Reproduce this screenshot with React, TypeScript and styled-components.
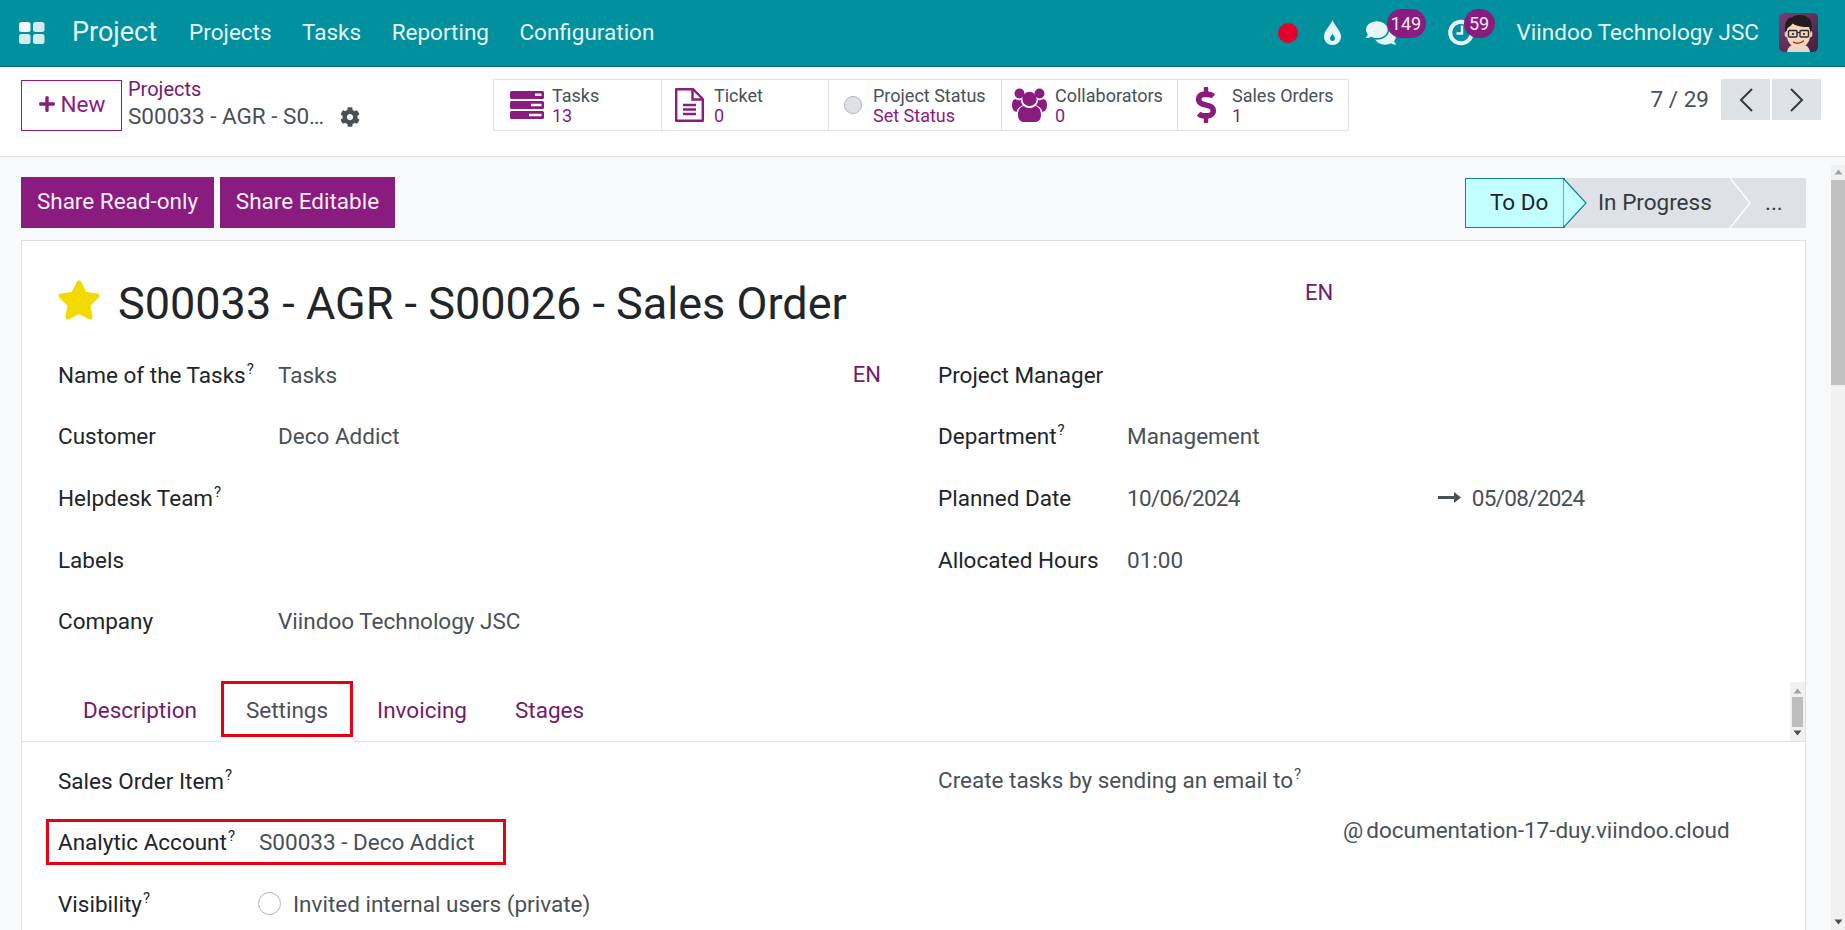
import React from "react";
import styled, { createGlobalStyle } from "styled-components";
import { FaCog, FaComments, FaDollarSign, FaPlus, FaStar } from "react-icons/fa";

const PURPLE = "#8a1c7f";
const LINK = "#741a6e";
const LINE = "#dee2e6";
const RED = "#e60012";
const BODY = "22.5px";

const Global = createGlobalStyle`
  html, body { margin: 0; padding: 0; height: 100%; overflow: hidden; }
  body { font-family: Roboto, "Liberation Sans", sans-serif; font-size: ${BODY}; color: #212529; background: #f8f9fb; }
  * { box-sizing: border-box; }
`;

const Page = styled.div`
  width: 1845px;
  height: 930px;
  display: flex;
  flex-direction: column;
  overflow: hidden;
`;

/* ---------- navbar ---------- */
const Nav = styled.header`
  height: 67px;
  flex: none;
  background: #00909e;
  border-bottom: 1px solid #0a6670;
  display: flex;
  align-items: center;
  color: #e6f5f6;
  padding: 0 27px 1px 19px;
`;
const AppName = styled.span`
  font-size: 27px;
  margin-left: 27px;
  margin-right: 32px;
  padding-bottom: 2px;
`;
const MenuItem = styled.span`
  font-size: ${BODY};
  margin-right: 30.5px;
  padding-bottom: 1px;
`;
const NavRight = styled.div`
  margin-left: auto;
  display: flex;
  align-items: center;
`;
const RecDot = styled.span`
  width: 20px;
  height: 20px;
  border-radius: 50%;
  background: #e4002b;
  margin-right: 26px;
`;
const IconSlot = styled.span<{ $mr: number }>`
  position: relative;
  display: flex;
  align-items: center;
  margin-right: ${(p) => p.$mr}px;
`;
const Badge = styled.span<{ $l: number; $w: number; $t: number }>`
  position: absolute;
  left: ${(p) => p.$l}px;
  top: ${(p) => p.$t}px;
  width: ${(p) => p.$w}px;
  height: 29px;
  border-radius: 15px;
  background: ${PURPLE};
  color: #f5e9f4;
  font-size: 18px;
  display: flex;
  align-items: center;
  justify-content: center;
`;
const Company = styled.span`
  font-size: ${BODY};
  margin-right: 20px;
  padding-bottom: 1px;
`;

/* ---------- control panel ---------- */
const Toolbar = styled.div`
  height: 90px;
  flex: none;
  background: #fff;
  border-bottom: 1px solid ${LINE};
  display: flex;
  align-items: flex-start;
  padding: 12px 24px 0 21px;
`;
const NewButton = styled.button`
  width: 101px;
  height: 51px;
  margin-top: 1px;
  background: #fff;
  border: 1px solid ${PURPLE};
  color: ${PURPLE};
  font: 400 22.5px Roboto, sans-serif;
  display: flex;
  align-items: center;
  justify-content: center;
  gap: 5px;
  padding: 0 0 3px;
  svg { color: ${PURPLE}; }
`;
const Crumbs = styled.div`
  width: 371px;
  padding-left: 6px;
  line-height: 27px;
  margin-top: -3px;
`;
const CrumbLink = styled.div`
  color: ${LINK};
  font-size: 20px;
`;
const CrumbCurrent = styled.div`
  display: flex;
  align-items: center;
  color: #495057;
  font-size: ${BODY};
  gap: 16px;
  svg { color: #495057; }
`;
const Stats = styled.div`
  display: flex;
  height: 52px;
  border: 1.5px solid ${LINE};
`;
const Stat = styled.div<{ $w: number; $pl: number; $gap: number }>`
  width: ${(p) => p.$w}px;
  padding-left: ${(p) => p.$pl}px;
  display: flex;
  align-items: center;
  gap: ${(p) => p.$gap}px;
  & + & { border-left: 1.5px solid ${LINE}; }
`;
const StatText = styled.div`
  display: flex;
  flex-direction: column;
  line-height: 20px;
  font-size: 18px;
  margin-top: 1px;
`;
const StatLabel = styled.span`
  color: #495057;
`;
const StatValue = styled.span`
  color: ${PURPLE};
`;
const StatusDot = styled.span`
  width: 18px;
  height: 18px;
  border-radius: 50%;
  background: #dee2e6;
  border: 1px solid #adb5bd;
`;
const Pager = styled.div`
  margin-left: auto;
  display: flex;
  align-items: flex-start;
  gap: 2px;
`;
const PagerText = styled.span`
  font-size: 22.5px;
  color: #495057;
  line-height: 41px;
  margin-right: 10px;
`;
const PagerButton = styled.span`
  width: 49px;
  height: 41px;
  background: #dee2e6;
  display: flex;
  align-items: center;
  justify-content: center;
`;

/* ---------- main ---------- */
const Main = styled.main`
  flex: 1;
  display: flex;
  min-height: 0;
  background: #f8f9fb;
`;
const Content = styled.div`
  width: 1831px;
  padding: 20px 25px 0 21px;
  display: flex;
  flex-direction: column;
`;
const TopRow = styled.div`
  display: flex;
  justify-content: space-between;
  align-items: flex-start;
  height: 63px;
  flex: none;
`;
const ActionGroup = styled.div`
  display: flex;
  gap: 6px;
`;
const ActionButton = styled.button<{ $w: number }>`
  width: ${(p) => p.$w}px;
  height: 51px;
  background: ${PURPLE};
  border: none;
  padding: 0 0 3px;
  color: #f6edf5;
  font: 400 22.5px Roboto, sans-serif;
`;
const StatusBar = styled.div`
  display: flex;
  width: 341px;
  height: 50px;
  margin-top: 1px;
  background: #dee2e6;
`;
const ActiveStage = styled.div`
  position: relative;
  width: 100px;
  height: 100%;
  background: #c3ffff;
  border: 1.5px solid #11868f;
  display: flex;
  align-items: center;
  padding: 0 0 2px 24px;
  font-size: ${BODY};
  color: #212529;
`;
const StageTip = styled.svg<{ $l: number }>`
  position: absolute;
  left: ${(p) => p.$l}px;
  top: -1.5px;
`;
const ChevronTip = styled.svg<{ $l: number }>`
  position: absolute;
  left: ${(p) => p.$l}px;
  top: 0;
`;
const Stage = styled.div<{ $w: number; $pl: number }>`
  position: relative;
  width: ${(p) => p.$w}px;
  height: 100%;
  padding: 0 0 2px ${(p) => p.$pl}px;
  display: flex;
  align-items: center;
  font-size: ${BODY};
  color: #343a40;
`;
const Sheet = styled.section`
  flex: 1;
  background: #fff;
  border: 1px solid ${LINE};
  border-bottom: none;
`;
const TitleRow = styled.div`
  height: 103px;
  display: flex;
  padding-left: 35px;
  padding-top: 37px;
`;
const Title = styled.h1`
  margin: -4px 0 0 17px;
  width: 1187px;
  font-size: 45px;
  font-weight: 400;
  line-height: 60px;
  color: #212529;
`;
const Lang = styled.span`
  color: ${LINK};
  font-size: 22px;
`;
const TitleLang = styled(Lang)`
  margin-top: 2px;
`;
const Columns = styled.div`
  display: grid;
  grid-template-columns: 880px 1fr;
  padding-left: 36px;
  height: 338px;
`;
const Row = styled.div<{ $label?: number; $pr?: number }>`
  position: relative;
  display: grid;
  grid-template-columns: ${(p) => p.$label ?? 220}px 1fr auto;
  align-items: center;
  height: 61.6px;
  padding-right: ${(p) => p.$pr ?? 0}px;
`;
const Label = styled.span`
  color: #212529;
  font-size: ${BODY};
`;
const Help = styled.sup`
  font-size: 15px;
  line-height: 0;
  margin-left: 1px;
  vertical-align: 9px;
`;
const Value = styled.span`
  color: #495057;
  font-size: ${BODY};
`;
const DateValue = styled(Value)`
  letter-spacing: -0.7px;
`;
const DateRange = styled.span`
  display: flex;
  align-items: center;
`;
const DateEnd = styled.span`
  margin-left: 198px;
  display: flex;
  align-items: center;
  gap: 11px;
`;
const TabBar = styled.div`
  display: flex;
  height: 60px;
  border-bottom: 1px solid ${LINE};
  padding-left: 36px;
`;
const Tab = styled.div<{ $active?: boolean }>`
  position: relative;
  height: ${(p) => (p.$active ? 60 : 59)}px;
  padding: 0 ${(p) => (p.$active ? 25 : 24)}px 4px;
  display: flex;
  align-items: center;
  font-size: ${BODY};
  color: ${(p) => (p.$active ? "#495057" : LINK)};
  background: #fff;
  &:first-child { padding-left: 25px; }
`;
const TabHighlight = styled.span`
  position: absolute;
  left: 0;
  right: 0;
  top: -1px;
  height: 56px;
  border: 3px solid ${RED};
`;
const TabScroll = styled.div`
  margin-left: auto;
  width: 15px;
  height: 59px;
  background: #f1f1f1;
  display: flex;
  flex-direction: column;
  align-items: center;
  justify-content: space-between;
  padding: 6px 0 5px;
`;
const TabThumb = styled.span`
  width: 11px;
  height: 30px;
  background: #bdbdbd;
`;
const Panel = styled.div`
  display: grid;
  grid-template-columns: 880px 1fr;
  padding: 8px 0 0 36px;
`;
const RowHighlight = styled.span`
  position: absolute;
  left: -12px;
  top: 7px;
  width: 460px;
  height: 46px;
  border: 3px solid ${RED};
`;
const Radio = styled.span`
  width: 23px;
  height: 23px;
  border: 1px solid #adb5bd;
  border-radius: 50%;
  background: #fff;
  margin-right: 12px;
`;
const RadioLine = styled.span`
  display: flex;
  align-items: center;
  color: #495057;
  font-size: ${BODY};
`;
const EmailLabel = styled.div`
  height: 61.6px;
  line-height: 61.6px;
  color: #495057;
  font-size: ${BODY};
`;
const EmailLine = styled.div`
  margin: 5px 0 0 405px;
  color: #495057;
  font-size: ${BODY};
  display: flex;
  gap: 3px;
`;
const PageScroll = styled.div`
  width: 14px;
  margin-top: 8px;
  background: #f1f1f1;
  display: flex;
  flex-direction: column;
  align-items: center;
  padding: 4px 0 5px;
`;
const PageThumb = styled.span`
  width: 14px;
  height: 205px;
  margin-top: 5px;
  background: #c1c1c1;
`;
const PageScrollEnd = styled.span`
  margin-top: auto;
  display: flex;
`;

const Arrow = ({ up, fill = "#505050" }: { up?: boolean; fill?: string }) => (
  <svg width="9" height="6" viewBox="0 0 9 6">
    <path d={up ? "M4.5 0.5L8.5 5.5H0.5Z" : "M0.5 0.5H8.5L4.5 5.5Z"} fill={fill} />
  </svg>
);

const AppsIcon = () => (
  <svg width="26" height="22" viewBox="0 0 26 22">
    <rect x="0" y="0" width="11.5" height="10" rx="2.5" fill="#f4fbfb" />
    <rect x="14" y="0" width="11.5" height="10" rx="2.5" fill="#d3ecee" />
    <rect x="0" y="12" width="11.5" height="10" rx="2.5" fill="#d3ecee" />
    <rect x="14" y="12" width="11.5" height="10" rx="2.5" fill="#d3ecee" />
  </svg>
);
const DropIcon = () => (
  <svg width="17" height="25" viewBox="0 0 17 25">
    <path d="M8.5 0C10 5 17 10.5 17 16.5C17 21.5 13 25 8.5 25C4 25 0 21.5 0 16.5C0 10.5 7 5 8.5 0Z" fill="#e6f5f6" />
    <path d="M8.5 13.5C9.2 15.5 11 16.8 11 18.6C11 20 9.9 21 8.5 21C7.1 21 6 20 6 18.6C6 16.8 7.8 15.5 8.5 13.5Z" fill="#00909e" />
  </svg>
);
const ClockIcon = () => (
  <svg width="26" height="27" viewBox="0 0 26 27">
    <circle cx="13" cy="13.5" r="10.8" fill="none" stroke="#e6f5f6" strokeWidth="4" />
    <path d="M14 6.5V14.5H8.5" fill="none" stroke="#e6f5f6" strokeWidth="2.4" />
  </svg>
);
const Avatar = () => (
  <svg width="39" height="39" viewBox="0 0 39 39">
    <defs>
      <linearGradient id="avbg" x1="0" y1="0" x2="1" y2="1">
        <stop offset="0" stopColor="#7a3f72" />
        <stop offset="1" stopColor="#43203f" />
      </linearGradient>
    </defs>
    <rect width="39" height="39" rx="5" fill="url(#avbg)" />
    <path d="M8 39C9 33 13 31 19.5 31C26 31 30 33 31 39Z" fill="#e9d4c6" />
    <ellipse cx="7.6" cy="21" rx="2" ry="3.2" fill="#f0c9ad" />
    <ellipse cx="31.4" cy="21" rx="2" ry="3.2" fill="#f0c9ad" />
    <path d="M8 17C8 11 13 9 19.5 9C26 9 31 11 31 17V23C31 30 25 35 19.5 35C14 35 8 30 8 23Z" fill="#f6d3ba" />
    <path d="M6.5 20C4.5 10 9 3.5 13 4.5C16 1 27 1.5 29 5C33 6 33.5 14 32 20L30 14C24 14.5 17 13 13.5 10.5C12.5 13 10 14 8.5 15Z" fill="#241b1d" />
    <rect x="9.5" y="17.5" width="8.5" height="6.5" rx="1" fill="#f6d3ba" stroke="#2b2b2b" strokeWidth="1.4" />
    <rect x="21" y="17.5" width="8.5" height="6.5" rx="1" fill="#f6d3ba" stroke="#2b2b2b" strokeWidth="1.4" />
    <path d="M18 19.5H21" stroke="#2b2b2b" strokeWidth="1.2" />
    <circle cx="14" cy="21" r="1.1" fill="#222" />
    <circle cx="25" cy="21" r="1.1" fill="#222" />
    <path d="M14.5 29C17 31 22 30.5 24.5 28" fill="none" stroke="#7c4034" strokeWidth="1.3" strokeLinecap="round" />
  </svg>
);
const TasksIcon = () => (
  <svg width="34" height="28" viewBox="0 0 34 28" fill={PURPLE}>
    <path fillRule="evenodd" d="M1.5 0H32.5A1.5 1.5 0 0 1 34 1.5V6.5A1.5 1.5 0 0 1 32.5 8H1.5A1.5 1.5 0 0 1 0 6.5V1.5A1.5 1.5 0 0 1 1.5 0ZM25 2.5V5H31.5V2.5Z" />
    <path fillRule="evenodd" d="M1.5 10H32.5A1.5 1.5 0 0 1 34 11.5V16.5A1.5 1.5 0 0 1 32.5 18H1.5A1.5 1.5 0 0 1 0 16.5V11.5A1.5 1.5 0 0 1 1.5 10ZM21 12.7V15.3H31.5V12.7Z" />
    <path fillRule="evenodd" d="M1.5 20H32.5A1.5 1.5 0 0 1 34 21.5V26.5A1.5 1.5 0 0 1 32.5 28H1.5A1.5 1.5 0 0 1 0 26.5V21.5A1.5 1.5 0 0 1 1.5 20ZM19 22.7V25.3H31.5V22.7Z" />
  </svg>
);
const TicketIcon = () => (
  <svg width="29" height="34" viewBox="0 0 29 34" fill="none" stroke={PURPLE} strokeWidth="2.4">
    <path d="M1.2 1.2H18L27.8 11V32.8H1.2Z" strokeLinejoin="round" />
    <path d="M17.5 1.5V11.5H27.5" />
    <path d="M8 17H21M8 21.5H21M8 26H21" />
  </svg>
);
const UsersIcon = () => (
  <svg width="35" height="34" viewBox="0 0 35 34" fill={PURPLE}>
    <circle cx="17.5" cy="11" r="7.2" />
    <path d="M6 27C6 21 8.5 18.5 12 18C13.5 19.5 15.3 20 17.5 20C19.7 20 21.5 19.5 23 18C26.5 18.5 29 21 29 27C29 31.5 26.5 34 23 34H12C8.5 34 6 31.5 6 27Z" />
    <circle cx="7.5" cy="5.5" r="5" />
    <circle cx="27.5" cy="5.5" r="5" />
    <path d="M0 17C0 13 1.5 11 3.5 11C5 12 7 12.5 9 12C9 14 9.8 16 11 17.3C7.5 18.5 5 21 4.6 24C1.5 23.5 0 21 0 17Z" />
    <path d="M35 17C35 13 33.5 11 31.5 11C30 12 28 12.5 26 12C26 14 25.2 16 24 17.3C27.5 18.5 30 21 30.4 24C33.5 23.5 35 21 35 17Z" />
  </svg>
);
const Chevron = ({ left }: { left?: boolean }) => (
  <svg width="14" height="24" viewBox="0 0 14 24" fill="none" stroke="#343a40" strokeWidth="2">
    <path d={left ? "M13 1L2 12L13 23" : "M1 1L12 12L1 23"} />
  </svg>
);
const LongArrow = () => (
  <svg width="23" height="11" viewBox="0 0 23 11" fill="#495057">
    <path d="M0 4H16V0L23 5.5L16 11V7H0Z" />
  </svg>
);

const HelpMark = () => <Help>?</Help>;

export default function App() {
  return (
    <Page>
      <Global />
      <Nav>
        <AppsIcon />
        <AppName>Project</AppName>
        <MenuItem>Projects</MenuItem>
        <MenuItem>Tasks</MenuItem>
        <MenuItem>Reporting</MenuItem>
        <MenuItem>Configuration</MenuItem>
        <NavRight>
          <RecDot />
          <IconSlot $mr={25}>
            <DropIcon />
          </IconSlot>
          <IconSlot $mr={52}>
            <FaComments size={30} color="#e6f5f6" />
            <Badge $l={21} $w={39} $t={-9}>149</Badge>
          </IconSlot>
          <IconSlot $mr={43}>
            <ClockIcon />
            <Badge $l={16} $w={31} $t={-10}>59</Badge>
          </IconSlot>
          <Company>Viindoo Technology JSC</Company>
          <Avatar />
        </NavRight>
      </Nav>

      <Toolbar>
        <NewButton>
          <FaPlus size={18} />
          New
        </NewButton>
        <Crumbs>
          <CrumbLink>Projects</CrumbLink>
          <CrumbCurrent>
            S00033 - AGR - S0…
            <FaCog size={20} />
          </CrumbCurrent>
        </Crumbs>
        <Stats>
          <Stat $w={167} $pl={16} $gap={8}>
            <TasksIcon />
            <StatText>
              <StatLabel>Tasks</StatLabel>
              <StatValue>13</StatValue>
            </StatText>
          </Stat>
          <Stat $w={167} $pl={13} $gap={10}>
            <TicketIcon />
            <StatText>
              <StatLabel>Ticket</StatLabel>
              <StatValue>0</StatValue>
            </StatText>
          </Stat>
          <Stat $w={173} $pl={15} $gap={11}>
            <StatusDot />
            <StatText>
              <StatLabel>Project Status</StatLabel>
              <StatValue>Set Status</StatValue>
            </StatText>
          </Stat>
          <Stat $w={176} $pl={10} $gap={8}>
            <UsersIcon />
            <StatText>
              <StatLabel>Collaborators</StatLabel>
              <StatValue>0</StatValue>
            </StatText>
          </Stat>
          <Stat $w={171} $pl={10} $gap={8}>
            <FaDollarSign size={36} color={PURPLE} />
            <StatText>
              <StatLabel>Sales Orders</StatLabel>
              <StatValue>1</StatValue>
            </StatText>
          </Stat>
        </Stats>
        <Pager>
          <PagerText>7 / 29</PagerText>
          <PagerButton>
            <Chevron left />
          </PagerButton>
          <PagerButton>
            <Chevron />
          </PagerButton>
        </Pager>
      </Toolbar>

      <Main>
        <Content>
          <TopRow>
            <ActionGroup>
              <ActionButton $w={193}>Share Read-only</ActionButton>
              <ActionButton $w={175}>Share Editable</ActionButton>
            </ActionGroup>
            <StatusBar>
              <ActiveStage>
                To Do
                <StageTip $l={97} width="26" height="50" viewBox="0 0 26 50">
                  <path d="M0 0L23 25L0 50Z" fill="#c3ffff" stroke="#11868f" strokeWidth="1.2" />
                </StageTip>
              </ActiveStage>
              <Stage $w={166} $pl={33}>
                In Progress
                <ChevronTip $l={164} width="24" height="50" viewBox="0 0 24 50">
                  <path d="M1 0L21 25L1 50" fill="none" stroke="#fff" strokeWidth="1.4" />
                </ChevronTip>
              </Stage>
              <Stage $w={75} $pl={34}>...</Stage>
            </StatusBar>
          </TopRow>

          <Sheet>
            <TitleRow>
              <FaStar size={44} color="#f2d900" />
              <Title>S00033 - AGR - S00026 - Sales Order</Title>
              <TitleLang>EN</TitleLang>
            </TitleRow>
            <Columns>
              <div>
                <Row $pr={57}>
                  <Label>Name of the Tasks<HelpMark /></Label>
                  <Value>Tasks</Value>
                  <Lang>EN</Lang>
                </Row>
                <Row>
                  <Label>Customer</Label>
                  <Value>Deco Addict</Value>
                </Row>
                <Row>
                  <Label>Helpdesk Team<HelpMark /></Label>
                </Row>
                <Row>
                  <Label>Labels</Label>
                </Row>
                <Row>
                  <Label>Company</Label>
                  <Value>Viindoo Technology JSC</Value>
                </Row>
              </div>
              <div>
                <Row $label={189}>
                  <Label>Project Manager</Label>
                </Row>
                <Row $label={189}>
                  <Label>Department<HelpMark /></Label>
                  <Value>Management</Value>
                </Row>
                <Row $label={189}>
                  <Label>Planned Date</Label>
                  <DateRange>
                    <DateValue>10/06/2024</DateValue>
                    <DateEnd>
                      <LongArrow />
                      <DateValue>05/08/2024</DateValue>
                    </DateEnd>
                  </DateRange>
                </Row>
                <Row $label={189}>
                  <Label>Allocated Hours</Label>
                  <Value>01:00</Value>
                </Row>
              </div>
            </Columns>
            <TabBar>
              <Tab>Description</Tab>
              <Tab $active>
                Settings
                <TabHighlight />
              </Tab>
              <Tab>Invoicing</Tab>
              <Tab>Stages</Tab>
              <TabScroll>
                <Arrow up fill="#a3a3a3" />
                <TabThumb />
                <Arrow />
              </TabScroll>
            </TabBar>
            <Panel>
              <div>
                <Row $label={201}>
                  <Label>Sales Order Item<HelpMark /></Label>
                </Row>
                <Row $label={201}>
                  <Label>Analytic Account<HelpMark /></Label>
                  <Value>S00033 - Deco Addict</Value>
                  <RowHighlight />
                </Row>
                <Row $label={200}>
                  <Label>Visibility<HelpMark /></Label>
                  <RadioLine>
                    <Radio />
                    Invited internal users (private)
                  </RadioLine>
                </Row>
              </div>
              <div>
                <EmailLabel>
                  Create tasks by sending an email to<HelpMark />
                </EmailLabel>
                <EmailLine>
                  <span>@</span>
                  <span>documentation-17-duy.viindoo.cloud</span>
                </EmailLine>
              </div>
            </Panel>
          </Sheet>
        </Content>
        <PageScroll>
          <Arrow up fill="#a3a3a3" />
          <PageThumb />
          <PageScrollEnd>
            <Arrow />
          </PageScrollEnd>
        </PageScroll>
      </Main>
    </Page>
  );
}
